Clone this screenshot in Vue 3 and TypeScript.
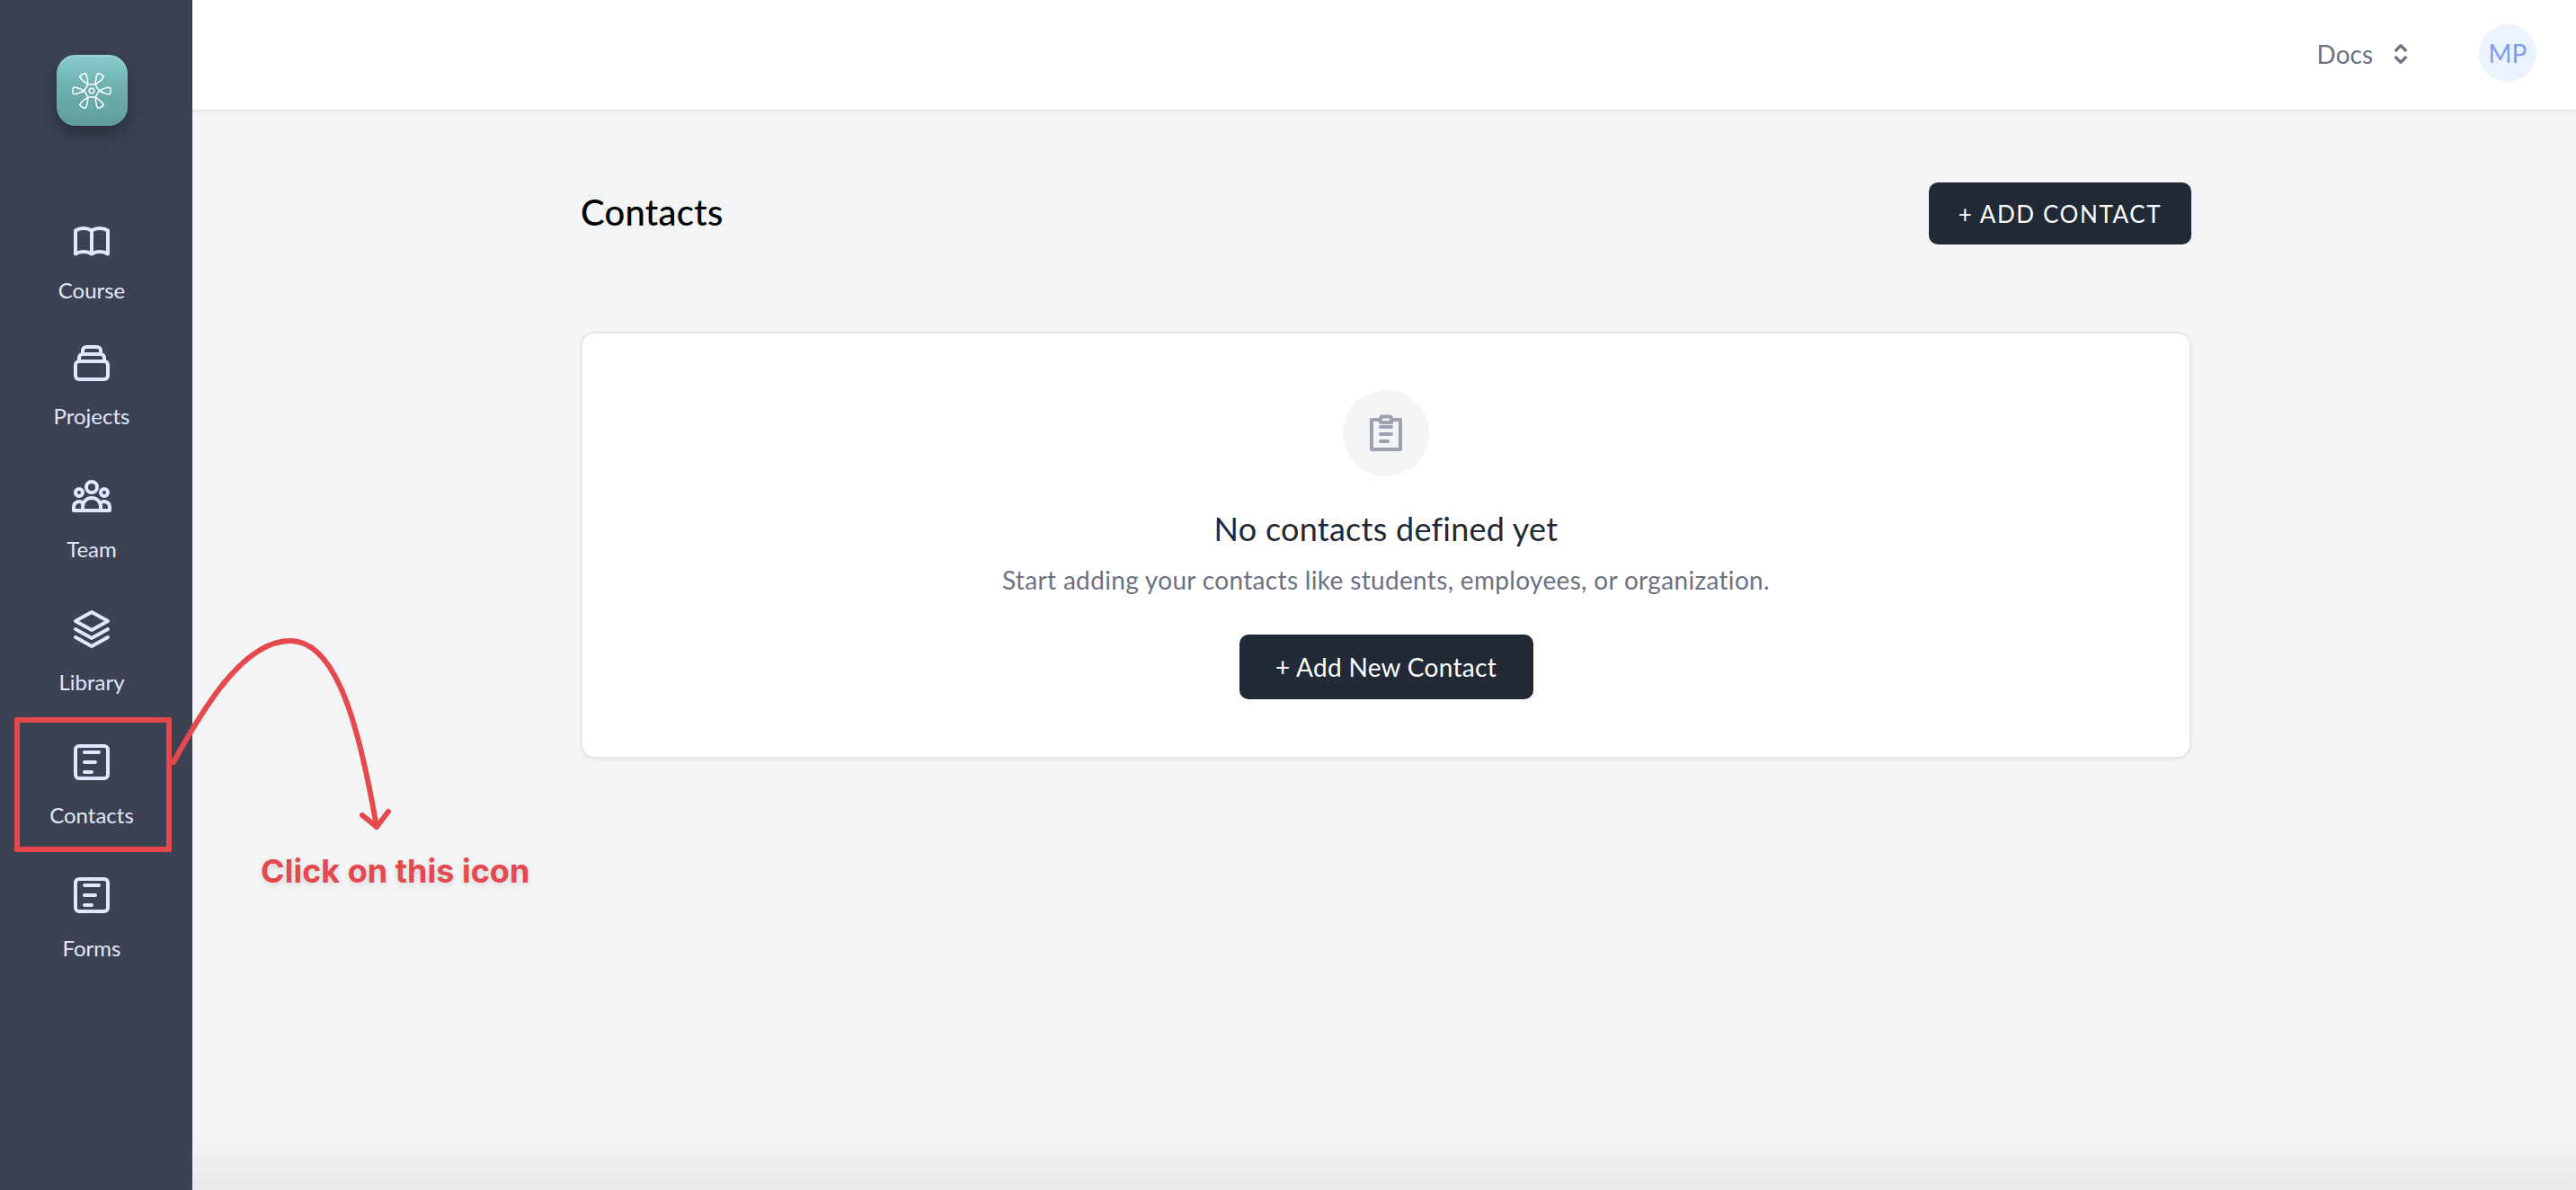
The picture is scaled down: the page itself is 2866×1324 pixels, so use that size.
<script setup lang="ts">
interface NavItem { label: string; first?: boolean; paths: string[] }
const formPaths = ['M5 3h14a2 2 0 0 1 2 2v14a2 2 0 0 1-2 2H5a2 2 0 0 1-2-2V5a2 2 0 0 1 2-2z', 'M8 6.5h8', 'M8 12h6', 'M8 17.5h4']
const items: NavItem[] = [
  { label: 'Course', first: true, paths: ['M12 6.253v13m0-13C10.832 5.477 9.246 5 7.5 5S4.168 5.477 3 6.253v13C4.168 18.477 5.754 18 7.5 18s3.332.477 4.5 1.253m0-13C13.168 5.477 14.754 5 16.5 5c1.747 0 3.332.477 4.5 1.253v13C19.832 18.477 18.247 18 16.5 18c-1.746 0-3.332.477-4.5 1.253'] },
  { label: 'Projects', paths: ['M19 11H5m14 0a2 2 0 012 2v6a2 2 0 01-2 2H5a2 2 0 01-2-2v-6a2 2 0 012-2m14 0V9a2 2 0 00-2-2M5 11V9a2 2 0 012-2m0 0V5a2 2 0 012-2h6a2 2 0 012 2v2M7 7h10'] },
  { label: 'Team', paths: ['M17 20h5v-2a3 3 0 00-5.356-1.857M17 20H7m10 0v-2c0-.656-.126-1.283-.356-1.857M7 20H2v-2a3 3 0 015.356-1.857M7 20v-2c0-.656.126-1.283.356-1.857m0 0a5.002 5.002 0 019.288 0M15 7a3 3 0 11-6 0 3 3 0 016 0zm6 3a2 2 0 11-4 0 2 2 0 014 0zM7 10a2 2 0 11-4 0 2 2 0 014 0z'] },
  { label: 'Library', paths: ['M12 2.5l9 5-9 5-9-5z', 'M3 12l9 5 9-5', 'M3 16.5l9 5 9-5'] },
  { label: 'Contacts', paths: formPaths },
  { label: 'Forms', paths: formPaths },
]
const angles: number[] = [0, 60, 120, 180, 240, 300]
</script>

<template>
  <div class="app">
    <aside class="sidebar">
      <div class="logo">
        <svg class="logo-mark" viewBox="-22 -20 44 40" fill="none" stroke="#fff" stroke-width="1.5" stroke-linejoin="round">
          <circle cx="0" cy="0" r="2.8" />
          <g v-for="a in angles" :key="a" :transform="`rotate(${a})`">
            <path d="M8.5 0C13-2.4 17-4.4 20.3-3.6 21.4-1.2 21.4 1.2 20.3 3.6 17 4.4 13 2.4 8.5 0Z" />
            <path d="M8.5 0Q6 3 4.25 7.36" />
          </g>
        </svg>
      </div>
      <nav class="nav">
        <a v-for="item in items" :key="item.label" class="nav-item" :class="{ 'nav-item-first': item.first }">
          <svg class="nav-icon" viewBox="0 0 24 24" fill="none" stroke="currentColor" stroke-width="2" stroke-linecap="round" stroke-linejoin="round">
            <path v-for="d in item.paths" :key="d" :d="d" />
          </svg>
          <span class="nav-label">{{ item.label }}</span>
        </a>
      </nav>
    </aside>

    <main class="main">
      <header class="topbar">
        <div class="docs">
          <span>Docs</span>
          <svg class="selector" viewBox="0 0 24 24" fill="none" stroke="currentColor" stroke-width="2.4" stroke-linecap="round" stroke-linejoin="round">
            <path d="M8 9l4-4 4 4m0 6l-4 4-4-4" />
          </svg>
        </div>
        <div class="avatar">MP</div>
      </header>

      <section class="content">
        <div class="page-head">
          <h1 class="title">Contacts</h1>
          <button class="btn btn-head">+ ADD CONTACT</button>
        </div>
        <div class="card">
          <div class="empty-icon">
            <svg viewBox="0 0 24 24" fill="none" stroke="#9ca3af" stroke-width="2" stroke-linecap="round" stroke-linejoin="round">
              <path d="M9 4.5H4V21h16V4.5h-5" />
              <path d="M9 6V4a1 1 0 0 1 1-1.2h4a1 1 0 0 1 1 1.2v2z" />
              <path d="M9 8.5h6M9 12.5h6M9 16.5h4" />
            </svg>
          </div>
          <h2 class="empty-title">No contacts defined yet</h2>
          <p class="empty-text">Start adding your contacts like students, employees, or organization.</p>
          <button class="btn btn-card">+ Add New Contact</button>
        </div>
      </section>
    </main>

    <div class="callout-box"></div>
    <svg class="callout-arrow" viewBox="0 0 460 340" fill="none" stroke="#e5484d" stroke-width="6" stroke-linecap="round" stroke-linejoin="round">
      <path d="M23 168C55 110 100 33 153 33C205 33 230 130 249 240" />
      <path d="M233 227L249 240L262 223" />
    </svg>
    <div class="callout-text">Click on this icon</div>
  </div>
</template>

<style scoped>
.app {
  position: relative;
  display: grid;
  grid-template-columns: 214px 1fr;
  width: 2866px;
  height: 1324px;
  overflow: hidden;
  font-family: Lato, "Noto Sans", sans-serif;
  background: #f3f4f6;
}
.sidebar {
  display: flex;
  flex-direction: column;
  align-items: center;
  box-sizing: border-box;
  padding: 61px 10px 0 0;
  background: #3c4252;
}
.logo {
  display: flex;
  align-items: center;
  justify-content: center;
  width: 79px;
  height: 79px;
  border-radius: 21px;
  background: linear-gradient(180deg, #8acfce 0%, #6fb2b1 40%, #5f9d9c 100%);
  box-shadow: 0 10px 18px rgba(20, 24, 34, 0.45), inset 0 2px 2px rgba(255, 255, 255, 0.12);
}
.logo-mark {
  width: 44px;
  height: 40px;
}
.nav {
  display: flex;
  flex-direction: column;
  width: 100%;
  margin-top: 104px;
}
.nav-item {
  display: flex;
  flex-direction: column;
  align-items: center;
  height: 148px;
  gap: 18px;
  color: #e0e7ff;
}
.nav-item-first {
  height: 136px;
  gap: 14px;
}
.nav-icon {
  width: 48px;
  height: 48px;
  flex: none;
}
.nav-label {
  font-size: 24px;
  line-height: 34px;
}
.main {
  display: flex;
  flex-direction: column;
  background: linear-gradient(180deg, rgba(232, 233, 235, 0) calc(100% - 60px), #e8e9eb 100%);
}
.topbar {
  display: flex;
  align-items: center;
  justify-content: flex-end;
  height: 122px;
  padding: 0 44px 0 0;
  background: #fff;
  box-shadow: 0 2px 4px rgba(0, 0, 0, 0.08);
}
.docs {
  display: flex;
  align-items: center;
  gap: 15px;
  margin: -2px 71px 0 0;
  color: #6b7280;
  font-size: 28px;
}
.selector {
  width: 32px;
  height: 32px;
}
.avatar {
  display: flex;
  align-items: center;
  justify-content: center;
  width: 64px;
  height: 64px;
  margin-top: -4px;
  border-radius: 50%;
  background: #ebf3fe;
  color: #7f9cf5;
  font-size: 28px;
}
.content {
  width: 1792px;
  margin-left: 432px;
}
.page-head {
  display: flex;
  align-items: center;
  justify-content: space-between;
  height: 69px;
  margin-top: 81px;
}
.title {
  margin: 0 0 3px;
  color: #000;
  font-size: 40px;
  font-weight: 500;
  letter-spacing: 0.25px;
}
.btn {
  border: none;
  border-radius: 10px;
  background: #222a38;
  color: #fff;
  font-family: inherit;
}
.btn-head {
  width: 292px;
  height: 69px;
  font-size: 26px;
  letter-spacing: 1.6px;
}
.card {
  display: flex;
  flex-direction: column;
  align-items: center;
  box-sizing: border-box;
  height: 475px;
  margin-top: 97px;
  padding-top: 63px;
  border: 2px solid #e5e7eb;
  border-radius: 16px;
  background: #fff;
  box-shadow: 0 1px 3px rgba(0, 0, 0, 0.06);
}
.empty-icon {
  display: flex;
  align-items: center;
  justify-content: center;
  width: 96px;
  height: 96px;
  border-radius: 50%;
  background: #f3f4f6;
}
.empty-icon svg {
  width: 48px;
  height: 48px;
}
.empty-title {
  margin: 33px 0 0;
  color: #1f2937;
  font-size: 36px;
  font-weight: 400;
  line-height: 50px;
  letter-spacing: 0.25px;
}
.empty-text {
  margin: 12px 0 0;
  color: #6b7280;
  font-size: 28px;
  line-height: 40px;
  letter-spacing: 0.33px;
}
.btn-card {
  width: 327px;
  height: 72px;
  margin-top: 41px;
  font-size: 28px;
  letter-spacing: 0.3px;
}
.callout-box {
  position: absolute;
  left: 16px;
  top: 798px;
  box-sizing: border-box;
  width: 175px;
  height: 150px;
  border: 6px solid #e5484d;
  border-radius: 2px;
}
.callout-arrow {
  position: absolute;
  left: 170px;
  top: 680px;
  width: 460px;
  height: 340px;
}
.callout-text {
  position: absolute;
  left: 290px;
  top: 946px;
  color: #e5484d;
  font-family: Inter, sans-serif;
  font-size: 36px;
  font-weight: 700;
  line-height: 46px;
  white-space: nowrap;
  text-shadow: 0 3px 6px rgba(0, 0, 0, 0.12);
}
</style>

<style>
html, body {
  margin: 0;
  overflow: hidden;
}
</style>
